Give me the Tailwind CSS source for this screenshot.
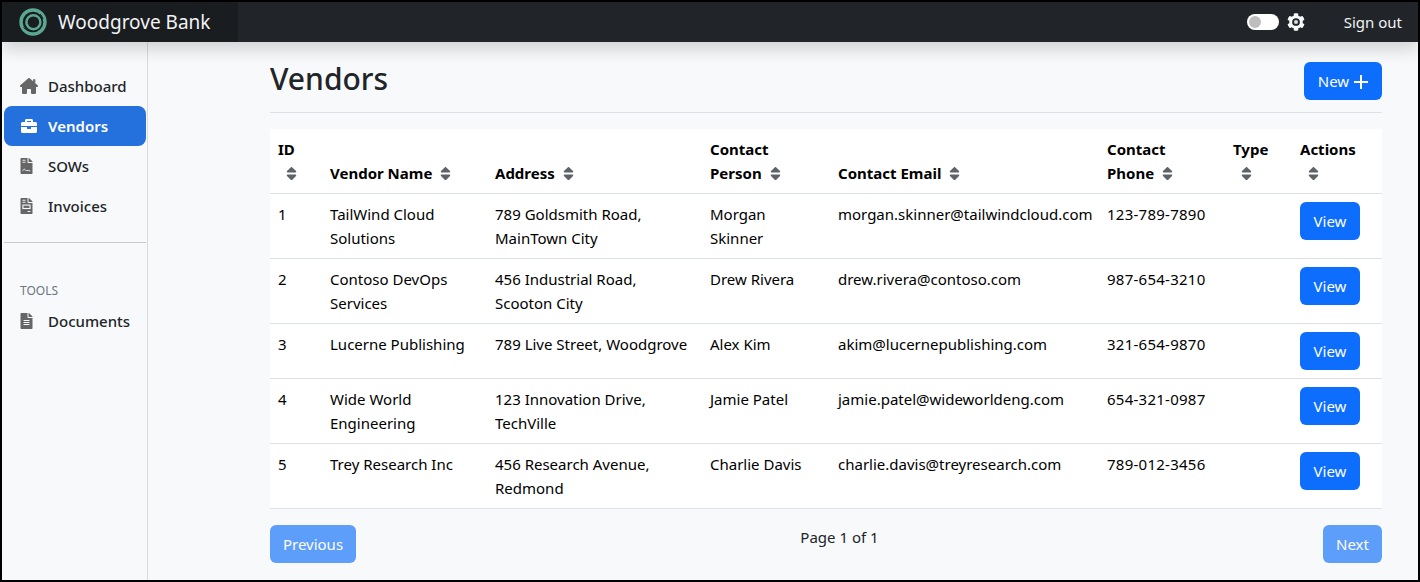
<!DOCTYPE html>
<html lang="en">
<head>
<meta charset="utf-8">
<title>Vendors</title>
<script src="https://cdn.jsdelivr.net/npm/@tailwindcss/browser@4"></script>
</head>
<body class="m-0 bg-black font-['Noto_Sans',sans-serif] text-[15px] leading-6 text-[#212529]">
<div class="w-[1420px] h-[582px] border-2 border-black bg-[#f8f9fa] flex flex-col overflow-hidden">
  <header class="relative z-10 h-10 shrink-0 flex items-center bg-[#212529] text-white shadow-[0_8px_16px_rgba(0,0,0,0.15)]">
    <div class="w-[236px] h-full flex items-center pl-[17px] gap-[11px] bg-[#1a1d20]">
      <svg class="w-7 h-7" viewBox="0 0 28 28" fill="none"><circle cx="14" cy="14" r="12" stroke="#5ba892" stroke-width="3.4"/><circle cx="14.4" cy="14.2" r="7" stroke="#5ba892" stroke-width="2.4"/><path d="M4.5 19.5a12 12 0 0 0 8 4" stroke="#1a1d20" stroke-width="1"/><path d="M21 6a11 11 0 0 1 3 5" stroke="#1a1d20" stroke-width="1"/></svg>
      <span class="text-[19px] leading-none text-[#f1f3f5]">Woodgrove Bank</span>
    </div>
    <div class="ml-auto flex items-center">
      <span class="w-8 h-4 rounded-full bg-white flex items-center pl-[2px]"><span class="w-3 h-3 rounded-full bg-[#bdbdbd]"></span></span>
      <svg class="w-[18px] h-[18px] ml-2 mr-[39px]" viewBox="0 0 512 512" fill="#f8f9fa"><path d="M487.4 315.7l-42.6-24.6c4.3-23.2 4.3-47 0-70.2l42.6-24.6c4.9-2.8 7.1-8.6 5.5-14-11.1-35.6-30-67.8-54.7-94.6-3.8-4.1-10-5.1-14.8-2.3L380.8 110c-17.9-15.4-38.5-27.3-60.8-35.1V25.8c0-5.6-3.9-10.5-9.4-11.7-36.7-8.2-74.3-7.8-109.2 0-5.5 1.2-9.4 6.1-9.4 11.7V75c-22.2 7.9-42.8 19.8-60.8 35.1L88.7 85.5c-4.9-2.8-11-1.9-14.8 2.3-24.7 26.7-43.6 58.9-54.7 94.6-1.7 5.4.6 11.2 5.5 14L67.3 221c-4.3 23.2-4.3 47 0 70.2l-42.6 24.6c-4.9 2.8-7.1 8.6-5.5 14 11.1 35.6 30 67.8 54.7 94.6 3.8 4.1 10 5.1 14.8 2.3l42.6-24.6c17.9 15.4 38.5 27.3 60.8 35.1v49.2c0 5.6 3.9 10.5 9.4 11.7 36.7 8.2 74.3 7.8 109.2 0 5.5-1.2 9.4-6.1 9.4-11.7v-49.2c22.2-7.9 42.8-19.8 60.8-35.1l42.6 24.6c4.9 2.8 11 1.9 14.8-2.3 24.7-26.7 43.6-58.9 54.7-94.6 1.5-5.5-.7-11.3-5.6-14.1z"/><circle cx="256" cy="256" r="110" fill="#212529"/><circle cx="256" cy="256" r="60" fill="#d8d8d8"/></svg>
      <span class="mr-4 text-[#f1f3f5]">Sign out</span>
    </div>
  </header>
  <div class="flex-1 flex min-h-0">
    <nav class="w-[146px] shrink-0 border-r border-[#d9dadb] pt-6 pl-0.5 pr-px font-medium">
      <a class="h-10 flex items-center pl-4 gap-[10px]"><svg class="w-[18px] h-4 shrink-0" viewBox="0 0 576 512" fill="#666"><path d="M575.8 255.5c0 18-15 32.1-32 32.1h-32l.7 160.2c0 2.7-.2 5.4-.5 8.1V472c0 22.1-17.9 40-40 40H456c-1.1 0-2.2 0-3.3-.1c-1.4 .1-2.8 .1-4.2 .1H416 392c-22.1 0-40-17.9-40-40V448 384c0-17.7-14.3-32-32-32H256c-17.7 0-32 14.3-32 32v64 24c0 22.1-17.9 40-40 40H160 128.1c-1.5 0-3-.1-4.5-.2c-1.2 .1-2.4 .2-3.6 .2H104c-22.1 0-40-17.9-40-40V360c0-.9 0-1.9 .1-2.8V287.6H32c-18 0-32-14-32-32.1c0-9 3-17 10-24L266.4 8c7-7 15-8 22-8s15 2 21 7L564.8 231.5c8 7 12 15 11 24z"/><rect x="420" y="40" width="70" height="110"/></svg>Dashboard</a>
      <a class="h-10 flex items-center pl-4 gap-[10px] bg-[#2470dc] rounded-lg text-white font-semibold"><svg class="w-[18px] h-4 shrink-0" viewBox="0 0 512 512" fill="#fff"><path d="M320 336c0 8.84-7.16 16-16 16h-96c-8.84 0-16-7.16-16-16v-48H0v144c0 25.6 22.4 48 48 48h416c25.6 0 48-22.4 48-48V288H320v48zm144-208h-80V80c0-25.6-22.4-48-48-48H176c-25.6 0-48 22.4-48 48v48H48c-25.6 0-48 22.4-48 48v80h512v-80c0-25.6-22.4-48-48-48zm-144 0H192V96h128v32z"/></svg>Vendors</a>
      <a class="h-10 flex items-center pl-4 gap-[15px]"><svg class="w-[13px] h-4 shrink-0" viewBox="0 0 384 512" fill="#666"><path d="M224 136V0H24C10.7 0 0 10.7 0 24v464c0 13.3 10.7 24 24 24h336c13.3 0 24-10.7 24-24V160H248c-13.2 0-24-10.8-24-24zm160-14.1v6.1H256V0h6.1c6.4 0 12.5 2.5 17 7l97.9 98c4.5 4.5 7 10.6 7 16.9z"/><path d="M64 72h96M64 136h96M70 410c30-50 50-70 70-40s30 40 60 30 70 10 110 10" fill="none" stroke="#f8f9fa" stroke-width="28"/></svg>SOWs</a>
      <a class="h-10 flex items-center pl-4 gap-[15px]"><svg class="w-[13px] h-4 shrink-0" viewBox="0 0 384 512" fill="#666"><path d="M224 136V0H24C10.7 0 0 10.7 0 24v464c0 13.3 10.7 24 24 24h336c13.3 0 24-10.7 24-24V160H248c-13.2 0-24-10.8-24-24zm160-14.1v6.1H256V0h6.1c6.4 0 12.5 2.5 17 7l97.9 98c4.5 4.5 7 10.6 7 16.9z"/><path d="M64 72h96M64 136h96M224 432h96" fill="none" stroke="#f8f9fa" stroke-width="30"/><rect x="78" y="226" width="228" height="110" fill="none" stroke="#f8f9fa" stroke-width="36"/></svg>Invoices</a>
      <hr class="mt-4 border-t border-[#c9cacb]">
      <div class="mt-10 pl-4 text-xs leading-4 font-normal text-[#6c757d]">TOOLS</div>
      <a class="h-10 mt-[2px] flex items-center pl-4 gap-[15px]"><svg class="w-[13px] h-4 shrink-0" viewBox="0 0 384 512" fill="#666"><path d="M224 136V0H24C10.7 0 0 10.7 0 24v464c0 13.3 10.7 24 24 24h336c13.3 0 24-10.7 24-24V160H248c-13.2 0-24-10.8-24-24zm64 236c0 6.6-5.4 12-12 12H108c-6.6 0-12-5.4-12-12v-8c0-6.6 5.4-12 12-12h168c6.6 0 12 5.4 12 12v8zm0-64c0 6.6-5.4 12-12 12H108c-6.6 0-12-5.4-12-12v-8c0-6.6 5.4-12 12-12h168c6.6 0 12 5.4 12 12v8zm0-72v8c0 6.6-5.4 12-12 12H108c-6.6 0-12-5.4-12-12v-8c0-6.6 5.4-12 12-12h168c6.6 0 12 5.4 12 12zm96-114.1v6.1H256V0h6.1c6.4 0 12.5 2.5 17 7l97.9 98c4.5 4.5 7 10.6 7 16.9z"/></svg>Documents</a>
    </nav>
    <main class="flex-1 min-w-0 pl-[122px] pr-9">
      <div class="flex items-center justify-between pt-5 pb-3 border-b border-[#dee2e6] mb-4">
        <h1 class="text-[30px] leading-[38px] font-medium -mt-1">Vendors</h1>
        <button class="h-[38px] w-[78px] rounded-md bg-[#0d6efd] text-white flex items-center justify-center gap-[5px]">New<svg class="w-[14px] h-[14px] mt-[2px]" viewBox="0 0 14 14" stroke="#fff" stroke-width="2"><path d="M7 0v14M0 7h14"/></svg></button>
      </div>
      <table class="w-[1112px] table-fixed border-collapse bg-white text-left text-black">
        <colgroup><col class="w-[52px]"><col class="w-[165px]"><col class="w-[215px]"><col class="w-[128px]"><col class="w-[269px]"><col class="w-[126px]"><col class="w-[67px]"><col class="w-[90px]"></colgroup>
        <thead class="font-bold">
          <tr class="border-b border-[#dee2e6] h-[64px]">
            <th class="p-2 align-bottom font-bold">ID<span class="block w-[26px] text-center"><svg class="inline w-[11px] h-[17px] align-[-3px]" viewBox="0 0 320 512" fill="#5f6369"><path d="M41 288h238c21.4 0 32.1 25.9 17 41L177 448c-9.4 9.4-24.6 9.4-33.9 0L24 329c-15.1-15.1-4.4-41 17-41zm255-105L177 64c-9.4-9.4-24.6-9.4-33.9 0L24 183c-15.1 15.1-4.4 41 17 41h238c21.4 0 32.1-25.9 17-41z"/></svg></span></th>
            <th class="p-2 align-bottom font-bold">Vendor Name <svg class="inline w-[11px] h-[17px] align-[-3px] ml-1" viewBox="0 0 320 512" fill="#5f6369"><path d="M41 288h238c21.4 0 32.1 25.9 17 41L177 448c-9.4 9.4-24.6 9.4-33.9 0L24 329c-15.1-15.1-4.4-41 17-41zm255-105L177 64c-9.4-9.4-24.6-9.4-33.9 0L24 183c-15.1 15.1-4.4 41 17 41h238c21.4 0 32.1-25.9 17-41z"/></svg></th>
            <th class="p-2 align-bottom font-bold">Address <svg class="inline w-[11px] h-[17px] align-[-3px] ml-1" viewBox="0 0 320 512" fill="#5f6369"><path d="M41 288h238c21.4 0 32.1 25.9 17 41L177 448c-9.4 9.4-24.6 9.4-33.9 0L24 329c-15.1-15.1-4.4-41 17-41zm255-105L177 64c-9.4-9.4-24.6-9.4-33.9 0L24 183c-15.1 15.1-4.4 41 17 41h238c21.4 0 32.1-25.9 17-41z"/></svg></th>
            <th class="p-2 align-bottom font-bold">Contact<br>Person <svg class="inline w-[11px] h-[17px] align-[-3px] ml-1" viewBox="0 0 320 512" fill="#5f6369"><path d="M41 288h238c21.4 0 32.1 25.9 17 41L177 448c-9.4 9.4-24.6 9.4-33.9 0L24 329c-15.1-15.1-4.4-41 17-41zm255-105L177 64c-9.4-9.4-24.6-9.4-33.9 0L24 183c-15.1 15.1-4.4 41 17 41h238c21.4 0 32.1-25.9 17-41z"/></svg></th>
            <th class="p-2 align-bottom font-bold">Contact Email <svg class="inline w-[11px] h-[17px] align-[-3px] ml-1" viewBox="0 0 320 512" fill="#5f6369"><path d="M41 288h238c21.4 0 32.1 25.9 17 41L177 448c-9.4 9.4-24.6 9.4-33.9 0L24 329c-15.1-15.1-4.4-41 17-41zm255-105L177 64c-9.4-9.4-24.6-9.4-33.9 0L24 183c-15.1 15.1-4.4 41 17 41h238c21.4 0 32.1-25.9 17-41z"/></svg></th>
            <th class="p-2 align-bottom font-bold">Contact<br>Phone <svg class="inline w-[11px] h-[17px] align-[-3px] ml-1" viewBox="0 0 320 512" fill="#5f6369"><path d="M41 288h238c21.4 0 32.1 25.9 17 41L177 448c-9.4 9.4-24.6 9.4-33.9 0L24 329c-15.1-15.1-4.4-41 17-41zm255-105L177 64c-9.4-9.4-24.6-9.4-33.9 0L24 183c-15.1 15.1-4.4 41 17 41h238c21.4 0 32.1-25.9 17-41z"/></svg></th>
            <th class="p-2 align-bottom font-bold">Type<span class="block w-[26px] text-center"><svg class="inline w-[11px] h-[17px] align-[-3px]" viewBox="0 0 320 512" fill="#5f6369"><path d="M41 288h238c21.4 0 32.1 25.9 17 41L177 448c-9.4 9.4-24.6 9.4-33.9 0L24 329c-15.1-15.1-4.4-41 17-41zm255-105L177 64c-9.4-9.4-24.6-9.4-33.9 0L24 183c-15.1 15.1-4.4 41 17 41h238c21.4 0 32.1-25.9 17-41z"/></svg></span></th>
            <th class="p-2 align-bottom font-bold">Actions<span class="block w-[26px] text-center"><svg class="inline w-[11px] h-[17px] align-[-3px]" viewBox="0 0 320 512" fill="#5f6369"><path d="M41 288h238c21.4 0 32.1 25.9 17 41L177 448c-9.4 9.4-24.6 9.4-33.9 0L24 329c-15.1-15.1-4.4-41 17-41zm255-105L177 64c-9.4-9.4-24.6-9.4-33.9 0L24 183c-15.1 15.1-4.4 41 17 41h238c21.4 0 32.1-25.9 17-41z"/></svg></span></th>
          </tr>
        </thead>
        <tbody>
          <tr class="border-b border-[#dee2e6] align-top">
            <td class="p-2">1</td><td class="p-2">TailWind Cloud<br>Solutions</td><td class="p-2">789 Goldsmith Road,<br>MainTown City</td><td class="p-2">Morgan<br>Skinner</td><td class="p-2 whitespace-nowrap">morgan.skinner@tailwindcloud.com</td><td class="p-2 whitespace-nowrap tracking-[0.25px]">123-789-7890</td><td class="p-2"></td>
            <td class="p-2"><button class="h-[38px] w-[60px] rounded-md bg-[#0d6efd] text-white">View</button></td>
          </tr>
          <tr class="border-b border-[#dee2e6] align-top">
            <td class="p-2">2</td><td class="p-2">Contoso DevOps<br>Services</td><td class="p-2">456 Industrial Road,<br>Scooton City</td><td class="p-2">Drew Rivera</td><td class="p-2 whitespace-nowrap">drew.rivera@contoso.com</td><td class="p-2 whitespace-nowrap tracking-[0.25px]">987-654-3210</td><td class="p-2"></td>
            <td class="p-2"><button class="h-[38px] w-[60px] rounded-md bg-[#0d6efd] text-white">View</button></td>
          </tr>
          <tr class="border-b border-[#dee2e6] align-top">
            <td class="p-2">3</td><td class="p-2">Lucerne Publishing</td><td class="p-2 whitespace-nowrap">789 Live Street, Woodgrove</td><td class="p-2">Alex Kim</td><td class="p-2 whitespace-nowrap">akim@lucernepublishing.com</td><td class="p-2 whitespace-nowrap tracking-[0.25px]">321-654-9870</td><td class="p-2"></td>
            <td class="p-2"><button class="h-[38px] w-[60px] rounded-md bg-[#0d6efd] text-white">View</button></td>
          </tr>
          <tr class="border-b border-[#dee2e6] align-top">
            <td class="p-2">4</td><td class="p-2">Wide World<br>Engineering</td><td class="p-2">123 Innovation Drive,<br>TechVille</td><td class="p-2">Jamie Patel</td><td class="p-2 whitespace-nowrap">jamie.patel@wideworldeng.com</td><td class="p-2 whitespace-nowrap tracking-[0.25px]">654-321-0987</td><td class="p-2"></td>
            <td class="p-2"><button class="h-[38px] w-[60px] rounded-md bg-[#0d6efd] text-white">View</button></td>
          </tr>
          <tr class="border-b border-[#dee2e6] align-top">
            <td class="p-2">5</td><td class="p-2">Trey Research Inc</td><td class="p-2">456 Research Avenue,<br>Redmond</td><td class="p-2">Charlie Davis</td><td class="p-2 whitespace-nowrap">charlie.davis@treyresearch.com</td><td class="p-2 whitespace-nowrap tracking-[0.25px]">789-012-3456</td><td class="p-2"></td>
            <td class="p-2"><button class="h-[38px] w-[60px] rounded-md bg-[#0d6efd] text-white">View</button></td>
          </tr>
        </tbody>
      </table>
      <div class="flex justify-between items-start mt-4">
        <button class="h-[38px] w-[86px] rounded-md bg-[#0d6efd] text-white opacity-65">Previous</button>
        <span>Page 1 of 1</span>
        <button class="h-[38px] w-[59px] rounded-md bg-[#0d6efd] text-white opacity-65">Next</button>
      </div>
    </main>
  </div>
</div>
</body>
</html>
